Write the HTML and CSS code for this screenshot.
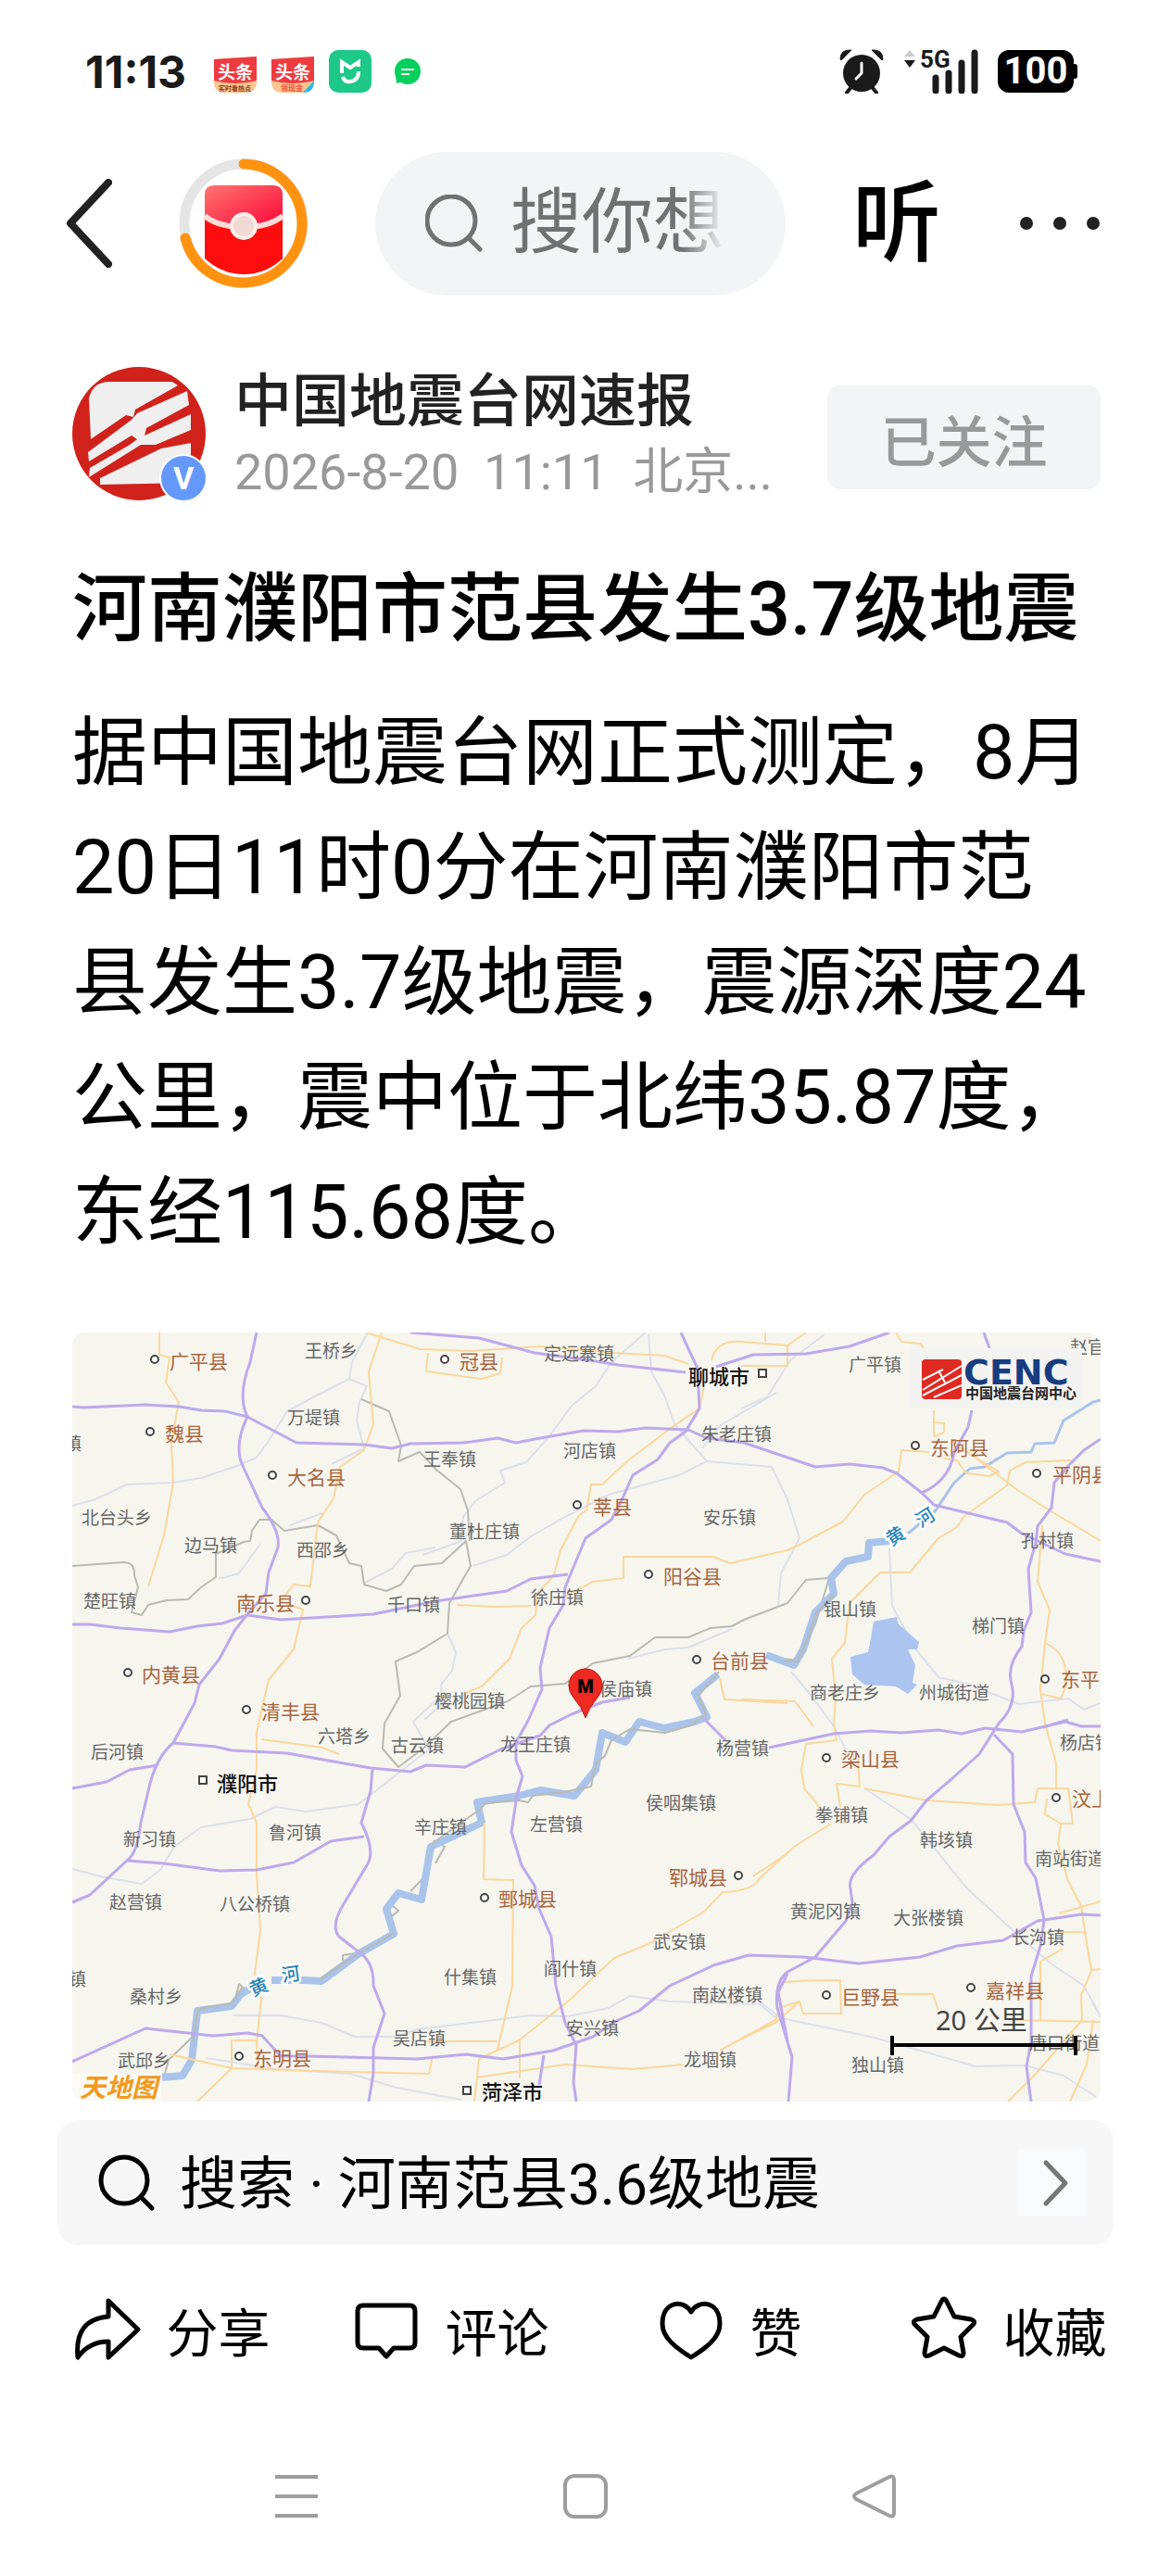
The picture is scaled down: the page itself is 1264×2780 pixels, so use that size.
FILE: index.html
```html
<!DOCTYPE html>
<html lang="zh-CN">
  <head>
    <meta charset="UTF-8" />
    <meta name="viewport" content="width=device-width, initial-scale=1.0" />
    <title>河南濮阳市范县发生3.7级地震</title>
    <link rel="stylesheet" href="styles.css">
  </head>
  <body>
    <div class="status">
      <span class="time">11:13</span>
      <svg class="app" viewBox="0 0 46 46">
        <path d="M0 10L46 7V34Q46 46 34 46H12Q0 46 0 34Z" fill="#fbc58f" />
        <path d="M0 10L46 7V33Q23 39 0 33Z" fill="#ee3b40" />
        <text x="4" y="31" class="app-name">头条</text>
        <text x="5" y="44" class="app-sub">实时看热点</text>
      </svg>
      <svg class="app" viewBox="0 0 46 46">
        <path d="M0 10L46 7V34Q46 46 34 46H12Q0 46 0 34Z" fill="#fbc58f" />
        <path d="M0 10L46 7V33Q23 39 0 33Z" fill="#ee3b40" />
        <path d="M46 33L34 46Q46 46 46 33Z" fill="#25b8f5" />
        <text x="4" y="31" class="app-name">头条</text>
        <text x="10" y="44" class="app-sub red">领现金</text>
      </svg>
      <svg class="app" viewBox="0 0 46 46">
        <rect width="46" height="46" rx="10" fill="#1dc888" />
        <path d="M14 25V13L23 19L32 13V18" fill="none" stroke="#fff" stroke-width="4" />
        <path d="M15 29Q17 35 23 34Q32 33 32 23" fill="none" stroke="#fff" stroke-width="4" />
      </svg>
      <svg class="app" viewBox="0 0 46 46">
        <circle cx="23" cy="23" r="14" fill="#06cf5c" />
        <path d="M10 28L11 36L18 34Z" fill="#06cf5c" />
        <path d="M16 21H30M16 26H25" stroke="#fff" stroke-width="2" />
      </svg>
      <span class="fill"></span>
      <svg class="alarm" viewBox="0 0 48 48">
        <circle cx="24" cy="26" r="20" fill="#1a1a1a" />
        <path d="M1 11Q1 0 13 1L2 12ZM47 11Q47 0 35 1L46 12Z" fill="#1a1a1a" stroke="#1a1a1a" />
        <path d="M12 42L8 47M36 42L40 47" stroke="#1a1a1a" stroke-width="4" stroke-linecap="round" />
        <path d="M24 15V26L18 32" fill="none" stroke="#fff" stroke-width="3" stroke-linecap="round" />
      </svg>
      <svg class="signal" viewBox="0 0 80 48">
        <path d="M0 8L6 1L12 8Z" fill="#ccc" />
        <path d="M0 12H12L6 20Z" fill="#1a1a1a" />
        <text x="17" y="20" class="net">5G</text>
        <path d="M34 31V45M48 26V45M62 15V45M76 4V45" stroke="#1a1a1a" stroke-width="7" stroke-linecap="round" />
      </svg>
      <span class="battery">100</span>
    </div>

    <header class="bar">
      <button class="back" aria-label="返回">
        <svg viewBox="0 0 50 96">
          <path d="M46 4L5 48L46 92" />
        </svg>
      </button>
      <button class="packet" aria-label="红包">
        <svg viewBox="0 0 140 140">
          <defs>
            <linearGradient id="red" x1="0" y1="0" x2="1" y2="1">
              <stop offset="0" stop-color="#ff7570" />
              <stop offset="1" stop-color="#fb0638" />
            </linearGradient>
          </defs>
          <circle cx="70" cy="70" r="64" fill="none" stroke="#e5e5e5" stroke-width="11" />
          <path d="M70 6A64 64 0 1 1 7 86" fill="none" stroke="#ff9310" stroke-width="11" stroke-linecap="round" />
          <path d="M28 60H112V108Q94 125 70 125Q46 125 28 108Z" fill="#fd0d0d" />
          <path d="M38 29H102Q112 29 112 39V64Q70 84 28 64V39Q28 29 38 29Z" fill="url(#red)" />
          <path d="M28 62Q42 74 70 74Q98 74 112 62" fill="none" stroke="#ffdcd8" stroke-width="6" />
          <circle cx="70" cy="73" r="13" fill="#f1d9d4" stroke="#ffeeeb" stroke-width="4" />
        </svg>
      </button>
      <label class="search">
        <svg viewBox="0 0 62 62">
          <circle cx="28" cy="28" r="26" />
          <path d="M47 47L59 59" />
        </svg>
        <input type="text" placeholder="搜你想" aria-label="搜索" />
      </label>
      <button class="listen">听</button>
      <button class="more" aria-label="更多">
        <svg viewBox="0 0 88 16">
          <circle cx="8" cy="8" r="7" />
          <circle cx="44" cy="8" r="7" />
          <circle cx="80" cy="8" r="7" />
        </svg>
      </button>
    </header>

    <main>
      <div class="author">
        <svg class="avatar" viewBox="0 0 144 144">
          <circle cx="72" cy="72" r="72" fill="#d0221b" />
          <path d="M18 34Q22 16 40 16H108L114 20L68 46L66 54L58 52L20 78Z" fill="#efefef" />
          <path d="M124 26L126 41L80 66L78 74L128 51V68L90 84L74 84L18 119L19 109L62 84L70 78L64 74L18 102L17 92L64 57L70 50Z" fill="#efefef" />
          <path d="M128 82V125L30 127V120L96 88Z" fill="#efefef" />
          <circle cx="120" cy="120" r="26" fill="#fff" />
          <circle cx="120" cy="120" r="24" fill="#6499fb" />
          <text x="120" y="132" text-anchor="middle" class="vip">V</text>
        </svg>
        <div class="who">
          <div class="name">中国地震台网速报</div>
          <div class="meta">2026-8-20&nbsp; 11:11&nbsp; 北京...</div>
        </div>
        <button class="follow">已关注</button>
      </div>

      <h1>河南濮阳市范县发生3.7级地震</h1>
      <p>据中国地震台网正式测定，8月20日11时0分在河南濮阳市范县发生3.7级地震，震源深度24公里，震中位于北纬35.87度，东经115.68度。</p>

      <svg class="map" viewBox="0 0 1110 830">
        <rect width="1110" height="830" fill="#f6f6ef" />

        <!-- streams -->
        <g class="stream">
          <path d="M0 187L25 180L59 164L109 162L139 157L175 145L199 135L210 120L232 85L260 70L299 50L302 32L319 0" />
          <path d="M299 50L318 58L310 75L307 95L315 125L280 142" />
          <path d="M619 0L582 32L565 58L539 79L515 112L490 140L462 149L467 162L435 182L422 199L420 225L379 240" />
          <path d="M622 2L625 42L640 70L650 99L685 139L755 145L772 180L785 222L765 260L762 295" />
          <path d="M685 139L655 154L579 175L532 199L495 220L469 240L432 252" />
          <path d="M722 82L750 70L775 30L812 2M760 65L700 100L680 125" />
          <path d="M882 232L885 295L909 340L935 372L965 379L1022 401L1075 395L1092 407L1110 400" />
          <path d="M855 492L905 525L965 599L1015 645L1055 680L1092 705L1110 739" />
          <path d="M742 722L765 740L862 760L905 772L975 792L1029 791L1070 802L1105 825" />
          <path d="M0 579L35 588L75 595L95 580L110 555L139 534L192 525L219 512L252 517L309 509L340 485L385 450" />
          <path d="M174 737L225 737L269 745L305 760L350 760L372 752L430 745L495 737L535 738L579 729L602 716L645 722L742 725L760 740" />
          <path d="M145 783L220 795L300 800L350 815L420 828" />
          <path d="M316 270L345 255L360 238L392 232M158 266L180 260L203 228M235 208L270 195" />
          <path d="M405 325L414 345L410 365L398 380L400 400L380 418M385 450L368 420L395 395" />
          <path d="M600 352L640 342L665 340L712 320M776 366L800 395L822 425L835 450" />
        </g>

        <!-- province borders -->
        <g class="border">
          <path d="M0 252L55 248Q68 248 67 262L71 275L64 302L75 305L82 294L102 289L125 288L139 275L155 264V239L185 226L192 225L194 214L202 202L215 202L229 214L265 208L285 219L299 249L312 252L315 272L339 279L355 272L369 252L399 249L425 225L430 252L407 292L405 325L372 345L349 355L354 392L337 422L335 449L352 469L380 448L409 420L470 398L495 382L532 379L562 357L602 349L629 329L665 329L689 319L712 317L725 310L772 292L792 267L817 265L802 315L782 354L768 352" />
          <path d="M312 72L342 85L355 122L352 139L375 129L394 149L419 169L427 192L429 225" />
          <path d="M100 800L104 785L130 760M177 715L180 703L188 710M292 678V672L306 670M345 630L352 624L343 616M365 603L380 588M392 573L402 555L390 548" />
        </g>

        <!-- Yellow River and the lake -->
        <g class="river">
          <path class="wide" d="M97 804L119 802L129 785L135 732L172 727L182 714L192 708M215 699L249 699L269 700L310 670L347 649L339 622L352 605L377 612L387 555L442 529L437 507L482 500L505 494L542 500L565 472L572 432L597 442L612 420L639 427L672 420L685 415L672 389L697 369M749 348L779 359L789 342L802 302L822 282L819 265L835 247L859 242L860 227L882 225" />
          <path d="M902 217L932 192L952 162L969 147L985 145L1009 130L1035 129L1039 120L1060 119L1070 95L1102 75L1110 73" />
        </g>
        <g class="border">
          <path d="M130 765L136 730L172 724L184 706M268 698L312 668L348 648M388 552L425 525L440 515L446 508L482 505L492 507L497 500L530 496L560 490L565 465L575 457L582 440L602 428L640 432L668 424L684 412L676 392L698 366M768 355L783 355L792 335L804 302L822 284" />
        </g>
        <path class="lake" d="M865 312L890 307L892 315L914 334L912 342L902 342L910 359L907 378L912 380L902 390L889 382L855 380L842 369L840 350L859 345L862 330Z" />

        <!-- county roads -->
        <g class="road">
          <path d="M94 0V24L105 27L101 54L115 75L107 119L109 162L99 219L82 274" />
          <path d="M334 0L320 42L325 99L315 127L289 145L282 179L265 205L257 274L239 272L225 290L249 299L239 342L212 375L204 409L199 432V472L190 509L199 529V585L203 645L197 692L204 719L199 765L201 795" />
          <path d="M317 0L375 18L430 20L505 15L585 22L639 25L665 34M384 22L382 42L442 50L462 44L464 27" />
          <path d="M682 59L677 82L645 104L599 139L572 164H560L555 192L547 197L527 235L520 262L502 282L500 305L485 319L472 352L442 382L425 389" />
          <path d="M415 294L455 296L495 295M532 285L562 269L595 265V242H692L710 249L772 235L785 229L832 204L855 175L892 150L895 127L925 129" />
          <path d="M690 30Q695 8 722 10L772 14L792 0M722 36H772V14M748 0V10" />
          <path d="M889 0L895 10L915 12L920 18M930 84V112L941 108V98L930 97M950 118L975 135L990 145" />
          <path d="M1080 138L1029 140L1012 149L1009 165L962 199L955 210L935 222L904 259L872 259L839 292L834 335L820 352L824 392L822 422L825 440L792 444L787 472L790 492L807 512" />
          <path d="M940 136L955 138L965 152L990 155L1000 150L975 135L1020 170L1055 192L1110 225" />
          <path d="M1047 208L1042 269L1055 299L1050 335L1045 385L1050 422L1062 465V492M1050 335Q1075 345 1073 380L1067 395L1045 390" />
          <path d="M855 492L922 505L999 510L1039 507L1042 492L1075 492L1080 530H1067L1050 520L1052 503M1067 530L1064 552L1075 592L1089 619L1095 659L1100 689L1089 715L1090 742" />
          <path d="M848 460L850 490L825 487L829 512M819 530L779 555L742 589Q735 603 702 604L682 625L622 660L585 675L535 722L482 764L439 784M722 396L780 398L800 425" />
          <path d="M445 529L444 590L476 591L475 705L459 774M735 587L772 562M699 373L704 396L772 400" />
          <path d="M765 702Q775 699 829 699L830 735H789L785 722L766 728M889 714H929L935 732M722 762L759 745L785 722" />
          <path d="M1019 742L1110 744M1045 742V679L1069 665M1065 647H1095M1065 627L1110 614M1102 742L1095 790L1077 830M1090 742L1040 800L1010 830M1100 688L1110 687" />
          <path d="M105 779L172 794L300 798L385 800L389 780M172 794L135 830M172 794V764H199M380 765H459M439 784L434 830M436 804L532 790L605 795L659 790M699 775L759 742L765 725M483 764V805M204 439L270 448L288 455" />
        </g>

        <!-- expressways -->
        <g class="highway">
          <path d="M0 80L12 81L79 78L115 80L139 84L165 85L189 91L242 119L279 120L315 121L345 125L365 120L422 119L459 114L479 119L505 114L552 106L589 107L619 103L665 105L685 114L725 119L802 145L839 142L875 146L890 152L917 173L930 186L1009 205L1025 217L1072 239L1110 247" />
          <path d="M199 0L192 32Q178 68 189 91Q174 122 184 144L205 189Q225 215 222 232L212 259L209 282L189 304L175 322L159 352L137 380L132 400L109 443Q90 458 82 495L74 529Q70 562 60 569L19 607L0 615" />
          <path d="M0 315L19 315L52 319L105 323L135 317L162 314L189 305L225 310L275 307L325 304L392 290L469 279L495 266L535 261" />
          <path d="M657 0L675 39L677 82L662 107L645 119L632 137L605 154L594 179L582 202L554 222L532 275L530 294L515 319L505 362L507 385L492 419L479 442V462L486 479L480 499L474 539L485 575L499 597L504 622L517 652L522 705L532 745L544 769L541 809L544 830" />
          <path d="M365 0L439 6L499 22L565 31L589 35L662 43M695 37L735 24L792 23L839 15L882 0" />
          <path d="M984 0L990 17M971 84L967 102L952 129Q947 160 917 173" />
          <path d="M1110 115L1092 127L1077 142L1060 162L1057 189L1042 209L1040 227L1032 255L1035 302L1027 322L1025 339Q1008 360 1014 380Q1020 402 1000 422L979 455L949 482L922 505L905 527L882 544L865 564Q836 585 840 600L842 615L835 635L802 674L772 690Q758 700 761 729L777 782L773 830" />
          <path d="M109 443L155 447L172 451L232 454L282 463L322 470L365 474L382 467L424 469L462 450L505 435L515 424L539 412L572 399L602 394" />
          <path d="M752 448L822 433L862 430L895 432L935 429L960 433L985 427L1025 431L1072 420L1089 425H1110M682 417L705 440M1048 426L1075 418" />
          <path d="M995 434L1015 455L1016 509L1028 539L1029 572L1040 589L1049 634L1045 662L1035 695L1035 765L1030 792L1035 830" />
          <path d="M1110 629L1089 628L1042 635L1005 656L955 662L915 674L849 681L789 674L730 672L692 683L645 705L612 732L585 744L562 760L519 775L465 784L425 779L372 784L255 781L225 781L205 759L189 756L152 759L79 751L0 787" />
          <path d="M0 492L37 485L62 472L92 467M60 570L99 573L159 581L199 580L239 572L279 549L315 544M509 780L504 812M772 692L762 712L772 765" />
          <path d="M324 472L322 495L312 529Q328 560 318 575L294 615Q278 640 288 652L310 669Q326 680 325 705L337 735L325 772V800L320 830" />
        </g>

        <!-- towns -->
        <g class="town">
          <text x="251" y="27">王桥乡</text>
          <text x="232" y="99">万堤镇</text>
          <text x="-9" y="127">镇</text>
          <text x="10" y="207">北台头乡</text>
          <text x="121" y="237">边马镇</text>
          <text x="242" y="242">西邵乡</text>
          <text x="12" y="297">楚旺镇</text>
          <text x="340" y="301">千口镇</text>
          <text x="509" y="30">定远寨镇</text>
          <text x="379" y="144">王奉镇</text>
          <text x="530" y="135">河店镇</text>
          <text x="679" y="117">朱老庄镇</text>
          <text x="681" y="207">安乐镇</text>
          <text x="407" y="222">董杜庄镇</text>
          <text x="495" y="293">徐庄镇</text>
          <text x="569" y="392">侯庙镇</text>
          <text x="391" y="405">樱桃园镇</text>
          <text x="838" y="42">广平镇</text>
          <text x="1077" y="23">赵官镇</text>
          <text x="1024" y="232">孔村镇</text>
          <text x="811" y="306">银山镇</text>
          <text x="971" y="324">梯门镇</text>
          <text x="796" y="396">商老庄乡</text>
          <text x="914" y="396">州城街道</text>
          <text x="20" y="460">后河镇</text>
          <text x="265" y="443">六塔乡</text>
          <text x="344" y="453">古云镇</text>
          <text x="55" y="554">新习镇</text>
          <text x="212" y="547">鲁河镇</text>
          <text x="369" y="541">辛庄镇</text>
          <text x="40" y="622">赵营镇</text>
          <text x="159" y="624">八公桥镇</text>
          <text x="-4" y="705">镇</text>
          <text x="62" y="724">桑村乡</text>
          <text x="49" y="793">武邱乡</text>
          <text x="346" y="769">吴店镇</text>
          <text x="462" y="452">龙王庄镇</text>
          <text x="695" y="456">杨营镇</text>
          <text x="494" y="538">左营镇</text>
          <text x="619" y="515">侯咽集镇</text>
          <text x="627" y="665">武安镇</text>
          <text x="401" y="703">什集镇</text>
          <text x="509" y="694">阎什镇</text>
          <text x="669" y="722">南赵楼镇</text>
          <text x="533" y="758">安兴镇</text>
          <text x="660" y="792">龙堌镇</text>
          <text x="1066" y="450">杨店镇</text>
          <text x="802" y="528">拳铺镇</text>
          <text x="915" y="555">韩垓镇</text>
          <text x="1039" y="575">南站街道</text>
          <text x="775" y="632">黄泥冈镇</text>
          <text x="886" y="639">大张楼镇</text>
          <text x="1014" y="660">长沟镇</text>
          <text x="1033" y="774">唐口街道</text>
          <text x="841" y="798">独山镇</text>
        </g>

        <!-- counties -->
        <g class="county">
          <text x="105" y="39">广平县</text>
          <text x="100" y="117">魏县</text>
          <text x="232" y="164">大名县</text>
          <text x="177" y="300">南乐县</text>
          <text x="75" y="377">内黄县</text>
          <text x="204" y="417">清丰县</text>
          <text x="418" y="39">冠县</text>
          <text x="562" y="196">莘县</text>
          <text x="638" y="271">阳谷县</text>
          <text x="689" y="362">台前县</text>
          <text x="926" y="132">东阿县</text>
          <text x="1058" y="161">平阴县</text>
          <text x="1067" y="382">东平县</text>
          <text x="195" y="791">东明县</text>
          <text x="460" y="619">鄄城县</text>
          <text x="644" y="596">郓城县</text>
          <text x="830" y="468">梁山县</text>
          <text x="1079" y="511">汶上县</text>
          <text x="986" y="718">嘉祥县</text>
          <text x="830" y="725">巨野县</text>
        </g>
        <g class="city">
          <text x="665" y="56">聊城市</text>
          <text x="156" y="495">濮阳市</text>
          <text x="442" y="828">菏泽市</text>
        </g>
        <g class="dot">
          <circle cx="89" cy="29" r="4" />
          <circle cx="84" cy="107" r="4" />
          <circle cx="216" cy="154" r="4" />
          <circle cx="252" cy="289" r="4" />
          <circle cx="60" cy="367" r="4" />
          <circle cx="188" cy="407" r="4" />
          <circle cx="402" cy="29" r="4" />
          <circle cx="545" cy="186" r="4" />
          <circle cx="622" cy="261" r="4" />
          <circle cx="674" cy="353" r="4" />
          <circle cx="910" cy="122" r="4" />
          <circle cx="1041" cy="152" r="4" />
          <circle cx="1050" cy="374" r="4" />
          <circle cx="180" cy="781" r="4" />
          <circle cx="445" cy="610" r="4" />
          <circle cx="719" cy="586" r="4" />
          <circle cx="814" cy="459" r="4" />
          <circle cx="1062" cy="502" r="4" />
          <circle cx="970" cy="707" r="4" />
          <circle cx="814" cy="715" r="4" />
          <rect x="741" y="40" width="8" height="8" />
          <rect x="137" y="479" width="8" height="8" />
          <rect x="422" y="814" width="8" height="8" />
        </g>
        <g class="water">
          <text x="0" y="0" transform="translate(884 231) rotate(-32)">黄</text>
          <text x="0" y="0" transform="translate(916 211) rotate(-32)">河</text>
          <text x="0" y="0" transform="translate(195 717) rotate(-24)">黄</text>
          <text x="0" y="0" transform="translate(227 701) rotate(-8)">河</text>
        </g>

        <!-- epicentre -->
        <path d="M554 416Q550 404 541 394Q536 388 536 381A18 18 0 0 1 572 381Q572 388 567 394Q558 404 554 416Z" fill="#ee2a22" stroke="#b3140f" />
        <text x="554" y="389" text-anchor="middle" class="pin">M</text>

        <!-- CENC logo -->
        <rect x="904" y="17" width="186" height="65" fill="#f3f3f1" />
        <rect x="917" y="29" width="43" height="43" rx="4" fill="#df2a22" />
        <path d="M918 51L940 40M918 62L960 36M918 68L960 46M930 70L960 57M935 41L942 54" stroke="#fff" stroke-width="2" />
        <text x="962" y="56" class="cenc">CENC</text>
        <text x="964" y="71" class="cenc-sub">中国地震台网中心</text>

        <text x="932" y="753" class="scale">20 公里</text>
        <path d="M885 769H1083M885 759V780M1083 759V780" stroke="#000" stroke-width="4" />
        <rect x="0" y="800" width="96" height="30" fill="#fbfaf4" />
        <text x="8" y="825" class="tianditu">天地图</text>
      </svg>
    </main>

    <a class="related" href="#">
      <svg class="glass" viewBox="0 0 62 62">
        <circle cx="28" cy="28" r="25" />
        <path d="M46 46L58 58" />
      </svg>
      <span>搜索 · 河南范县3.6级地震</span>
      <svg class="go" viewBox="0 0 72 72">
        <path d="M30 14L51 36L30 58" />
      </svg>
    </a>

    <div class="actions">
      <button>
        <svg viewBox="0 0 72 72">
          <path d="M37 6L69 37L37 67V50Q16 50 4 67Q0 26 37 23Z" />
        </svg>
        分享
      </button>
      <button>
        <svg viewBox="0 0 72 72">
          <path d="M11 11H61Q67 11 67 17V51Q67 57 61 57H44L36 66L28 57H11Q5 57 5 51V17Q5 11 11 11Z" />
        </svg>
        评论
      </button>
      <button>
        <svg viewBox="0 0 72 72">
          <path d="M36 18C28 4 5 6 5 31C5 46 20 57 36 67C52 57 67 46 67 31C67 6 44 4 36 18Z" />
        </svg>
        赞
      </button>
      <button>
        <svg viewBox="0 0 72 72">
          <path d="M33 7Q36 1 39 7L47 23L65 26Q71 28 67 32L54 45L57 62Q57 67 52 65L36 57L20 65Q15 67 15 62L18 45L5 32Q1 28 7 26L25 23Z" />
        </svg>
        收藏
      </button>
    </div>

    <nav class="system">
      <button aria-label="菜单">
        <svg viewBox="0 0 48 48"><path d="M1 3H47M1 24H47M1 45H47" /></svg>
      </button>
      <button aria-label="主页">
        <svg viewBox="0 0 48 48"><rect x="2" y="2" width="44" height="44" rx="10" /></svg>
      </button>
      <button aria-label="后退">
        <svg viewBox="0 0 48 48"><path d="M4 21L40 3Q45 1 45 6V42Q45 47 40 45L4 27Q0 24 4 21Z" /></svg>
      </button>
    </nav>
  </body>
</html>
```

FILE: styles.css
```css
* {
  margin: 0;
  padding: 0;
  box-sizing: border-box;
}
body {
  background: #fff;
  color: #000;
  font-family: Roboto, "Noto Sans CJK SC", sans-serif;
}
button {
  border: none;
  background: none;
  color: inherit;
  font-family: inherit;
}
svg {
  display: block;
  flex-shrink: 0;
}

/* status bar */
.status {
  display: flex;
  align-items: center;
  height: 154px;
  padding: 0 105px 0 92px;
}
.time {
  font-family: Inter, sans-serif;
  font-size: 48px;
  font-weight: 700;
  color: #1a1a1a;
  margin-right: 30px;
}
.app {
  width: 46px;
  height: 46px;
  margin-right: 16px;
}
.app-name {
  font-size: 19px;
  font-weight: 700;
  fill: #fff;
}
.app-sub {
  font-size: 7px;
  font-weight: 700;
  fill: #8a3a12;
}
.app-sub.red {
  font-size: 8px;
  fill: #f0503a;
}
.fill {
  flex: 1;
}
.alarm {
  width: 48px;
  height: 48px;
  margin-right: 22px;
}
.signal {
  width: 80px;
  height: 48px;
  margin-right: 21px;
}
.net {
  font-size: 26px;
  font-weight: 700;
  fill: #1a1a1a;
}
.battery {
  position: relative;
  width: 82px;
  height: 46px;
  border-radius: 12px;
  background: #000;
  color: #fff;
  font-size: 40px;
  font-weight: 700;
  line-height: 46px;
  text-align: center;
}
.battery::after {
  content: "";
  position: absolute;
  right: -4px;
  top: 15px;
  width: 6px;
  height: 16px;
  border-radius: 3px;
  background: #000;
}

/* top bar */
.bar {
  display: flex;
  align-items: center;
  gap: 72px;
  height: 174px;
  padding: 0 76px 0 71px;
}
.back svg {
  width: 50px;
  height: 96px;
  fill: none;
  stroke: #222;
  stroke-width: 8;
  stroke-linecap: round;
  stroke-linejoin: round;
}
.packet svg {
  width: 140px;
  height: 140px;
}
.search {
  flex: 1;
  min-width: 0;
  display: flex;
  align-items: center;
  gap: 30px;
  height: 155px;
  padding: 0 66px 0 54px;
  border-radius: 78px;
  background: #f3f4f6;
}
.search svg {
  width: 62px;
  height: 62px;
  fill: none;
  stroke: #707173;
  stroke-width: 5;
  stroke-linecap: round;
}
.search input {
  flex: 1;
  min-width: 0;
  height: 110px;
  border: none;
  outline: none;
  background: none;
  color: #707173;
  font-family: inherit;
  font-size: 77px;
  -webkit-mask-image: linear-gradient(to right, #000 80%, transparent);
  mask-image: linear-gradient(to right, #000 80%, transparent);
}
.search input::placeholder {
  color: #707173;
}
.listen {
  margin-right: 12px;
  font-size: 96px;
  line-height: 110px;
  font-weight: 500;
}
.more svg {
  width: 88px;
  height: 16px;
  fill: #222;
}

/* article */
main {
  padding: 68px 76px 20px 78px;
}
.author {
  display: flex;
  align-items: flex-start;
}
.avatar {
  width: 144px;
  height: 144px;
}
.vip {
  font-size: 34px;
  font-weight: 700;
  fill: #fff;
}
.who {
  flex: 1;
  min-width: 0;
  margin: 0 20px 0 31px;
}
.name {
  font-size: 62px;
  line-height: 76px;
  font-weight: 500;
  color: #222;
  white-space: nowrap;
}
.meta {
  font-size: 54px;
  line-height: 76px;
  color: #999;
  white-space: nowrap;
}
.follow {
  width: 295px;
  height: 112px;
  margin-top: 20px;
  border-radius: 14px;
  background: #f3f4f6;
  color: #999;
  font-size: 60px;
  font-weight: 500;
}
h1 {
  margin-top: 48px;
  font-size: 81px;
  line-height: 124px;
  font-weight: 500;
}
p {
  margin: 31px 0 67px;
  font-size: 81px;
  line-height: 124px;
}

/* map */
.map {
  width: 100%;
  height: auto;
  border-radius: 14px;
}
.stream path,
.border path,
.river path,
.road path,
.highway path {
  fill: none;
  stroke-linejoin: round;
}
.stream {
  stroke: #dcdfeb;
  stroke-width: 2;
}
.border {
  stroke: #b9bab1;
  stroke-width: 2;
}
.river {
  stroke: #a9c3ea;
  stroke-width: 3;
}
.river .wide {
  stroke-width: 8;
}
.lake {
  fill: #abc4f0;
}
.road {
  stroke: #fbd79c;
  stroke-width: 2;
}
.highway {
  stroke: #bda9ec;
  stroke-width: 3;
}
.town {
  font-size: 19px;
  fill: #666;
}
.county {
  font-size: 21px;
  fill: #a8643e;
}
.city {
  font-size: 22px;
  font-weight: 500;
  fill: #111;
}
.dot {
  fill: #fff;
  stroke: #444;
  stroke-width: 2;
}
.water {
  font-size: 20px;
  font-weight: 500;
  fill: #2b86b5;
  stroke: #fff;
  stroke-width: 5;
  paint-order: stroke;
}
.pin {
  font-size: 20px;
  font-weight: 900;
}
.cenc {
  font-family: "DejaVu Sans", sans-serif;
  font-size: 38px;
  font-weight: 700;
  fill: #173d80;
}
.cenc-sub {
  font-size: 15px;
  font-weight: 700;
  fill: #222;
}
.scale {
  font-family: "Noto Sans", "Noto Sans CJK SC", sans-serif;
  font-size: 29px;
  fill: #444;
}
.tianditu {
  font-size: 28px;
  font-weight: 700;
  font-style: italic;
  fill: #f29a1f;
}

/* related search */
.related {
  display: flex;
  align-items: center;
  height: 135px;
  margin: 0 62px;
  padding: 0 31px 0 44px;
  border-radius: 22px;
  background: #f7f7f7;
  color: #000;
  text-decoration: none;
  font-size: 62px;
}
.related span {
  flex: 1;
  padding-bottom: 8px;
  white-space: nowrap;
}
.glass {
  width: 62px;
  height: 62px;
  margin-right: 26px;
  fill: none;
  stroke: #000;
  stroke-width: 5;
  stroke-linecap: round;
}
.go {
  width: 72px;
  height: 72px;
  background: #f9fafb;
  fill: none;
  stroke: #777;
  stroke-width: 5;
  stroke-linecap: round;
  stroke-linejoin: round;
}

/* bottom actions */
.actions {
  display: grid;
  grid-template-columns: repeat(4, 1fr);
  padding: 0 25px 0 35px;
  height: 180px;
}
.actions button {
  display: flex;
  align-items: center;
  justify-content: center;
  gap: 28px;
  font-size: 56px;
}
.actions svg {
  width: 72px;
  height: 72px;
  fill: none;
  stroke: #000;
  stroke-width: 5;
  stroke-linejoin: round;
}

/* system navigation */
.system {
  display: grid;
  grid-template-columns: repeat(3, 1fr);
  height: 182px;
  padding: 0 164px;
}
.system button {
  display: flex;
  align-items: center;
  justify-content: center;
}
.system svg {
  width: 48px;
  height: 48px;
  fill: none;
  stroke: #9e9e9e;
  stroke-width: 4;
}
```
